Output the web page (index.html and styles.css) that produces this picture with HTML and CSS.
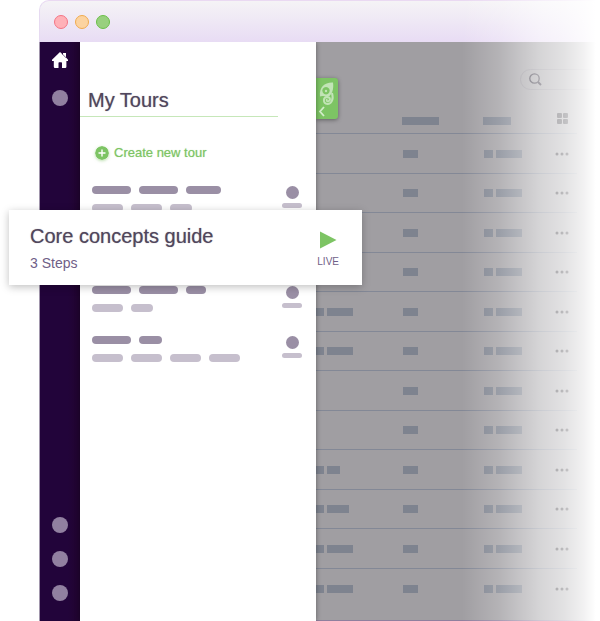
FILE: index.html
```html
<!DOCTYPE html>
<html lang="en">
<head>
  <meta charset="UTF-8">
  <meta name="viewport" content="width=device-width, initial-scale=1.0">
  <title>My Tours</title>
  <link rel="stylesheet" href="styles.css">
</head>
<body>
<div class="window">
  <header class="titlebar">
    <button class="light red" aria-label="Close"></button>
    <button class="light amber" aria-label="Minimize"></button>
    <button class="light green" aria-label="Zoom"></button>
  </header>
  <div class="content">
    <nav class="sidebar">
      <a href="#" class="home" aria-label="Home">
        <svg viewBox="0 0 16 16" width="16" height="16" fill="#fff"><path d="M8 0 L11 2.8 V1 H14 V5.6 L16 7.7 V9 H14.4 V14.8 Q14.4 16 13.2 16 H10 V11 Q10 10.3 9.3 10.3 H7.2 Q6.5 10.3 6.5 11 V16 H3 Q1.8 16 1.8 14.8 V9 H0 V7.7 Z"/><path d="M10.3 2 L14.3 6" stroke="#22043a" stroke-width=".6"/></svg>
      </a>
      <a href="#" class="dot" aria-label="Tours"></a>
      <div class="nav-bottom">
        <a href="#" class="dot" aria-label="Help"></a>
        <a href="#" class="dot" aria-label="Settings"></a>
        <a href="#" class="dot" aria-label="Account"></a>
      </div>
    </nav>

    <section class="panel">
      <h1>My Tours</h1>
      <button class="create">
        <svg viewBox="0 0 14 14" width="14" height="14"><circle cx="7" cy="7" r="7" fill="#7dc464"/><path d="M7 4 V10 M4 7 H10" stroke="#fff" stroke-width="1.4" stroke-linecap="round"/></svg>
        Create new tour
      </button>
      <ul class="tours">
        <li>
          <div class="lines">
            <div class="line dark"><i class="w39"></i><i class="w39"></i><i class="w35"></i></div>
            <div class="line"><i class="w31"></i><i class="w31"></i><i class="w22"></i></div>
          </div>
          <div class="person"><b></b><i></i></div>
        </li>
        <li>
          <article class="card">
            <div class="card-text">
              <h2>Core concepts guide</h2>
              <p>3 Steps</p>
            </div>
            <button class="play">
              <svg viewBox="0 0 18 18" width="18" height="18"><path d="M1 .5 L17.5 9 L1 17.5 Z" fill="#7dc464"/></svg>
              LIVE
            </button>
          </article>
        </li>
        <li>
          <div class="lines">
            <div class="line dark"><i class="w39"></i><i class="w39"></i><i class="w20"></i></div>
            <div class="line"><i class="w31"></i><i class="w22"></i></div>
          </div>
          <div class="person"><b></b><i></i></div>
        </li>
        <li>
          <div class="lines">
            <div class="line dark"><i class="w39"></i><i class="w23"></i></div>
            <div class="line"><i class="w31"></i><i class="w31"></i><i class="w31"></i><i class="w31"></i></div>
          </div>
          <div class="person"><b></b><i></i></div>
        </li>
      </ul>
    </section>

    <main class="page">
      <button class="drawer-tab" aria-label="Collapse panel">
        <svg viewBox="0 0 22 41" width="22" height="41" fill="none">
          <path fill="#c2e4b6" fill-rule="evenodd" d="M17 4.5 C9 4 3 9 4 18.500 C7 17 8.500 19 12 18.500 C16 17.500 18 11 17 4.500 Z M10 9 A3.700 3.700 0 1 0 10.010 9 Z"/>
          <path stroke="#c2e4b6" stroke-width="2" d="M16 15 C18 22 15 26 11.500 26 C6.500 25.500 7 18.500 11.500 19 C15 19.500 14.500 23.500 11.500 23.200 C10.500 23 10.500 21.500 11.500 21.600"/>
          <circle cx="10" cy="13" r="1.200" fill="#c2e4b6"/>
          <path stroke="#d3edca" stroke-width="1.800" d="M8 29 L4 33.500 L8 38"/>
        </svg>
      </button>
      <label class="search">
        <svg viewBox="0 0 13 13" width="13" height="13" fill="none" stroke="#34303e"><circle cx="5.500" cy="5.500" r="4.700" stroke-width="1.300"/><path d="M9 9 L12 12" stroke-width="2"/></svg>
        <input type="search" aria-label="Search">
      </label>
      <table>
        <thead>
          <tr>
            <th></th>
            <th><i class="block w37"></i></th>
            <th><i class="block w28"></i></th>
            <th><svg viewBox="0 0 12 12" width="12" height="12" fill="#2b2930"><rect width="5" height="5" rx="1"/><rect x="6" width="5" height="5" rx="1"/><rect y="6" width="5" height="5" rx="1"/><rect x="6" y="6" width="5" height="5" rx="1"/></svg></th>
          </tr>
        </thead>
        <tbody id="rows"></tbody>
      </table>
    </main>
  </div>
</div>
<script>
// width of the first column block in each row, 0 = hidden
const rows = [0, 0, 0, 0, 26, 26, 0, 0, 13, 22, 26, 26];

function addRow(width) {
  const tr = document.createElement('tr');
  const first = width ? `<i class="block w8"></i><i class="block" style="width:${width}px"></i>` : '';
  tr.innerHTML = `<td>${first}</td>
    <td><i class="block w15"></i></td>
    <td><i class="block w9"></i><i class="block w26"></i></td>
    <td><svg viewBox="0 0 14 4" width="14" height="4" fill="#1d1b22"><circle cx="2" cy="2" r="1.500"/><circle cx="7" cy="2" r="1.500"/><circle cx="12" cy="2" r="1.500"/></svg></td>`;
  document.getElementById('rows').appendChild(tr);
}

rows.forEach(addRow);
</script>
</body>
</html>
```
FILE: styles.css
```css
* { box-sizing: border-box; }
body {
  margin: 0;
  font-family: 'Liberation Sans', Arial, sans-serif;
  background: #fff;
  color: #50465c;
  overflow-x: hidden;
}
button {
  background: none;
  border: none;
  padding: 0;
  font-family: inherit;
  cursor: pointer;
}
svg {
  display: block;
}
i, b {
  display: block;
}
.window {
  position: relative;
  margin-left: 39px;
  min-height: 100vh;
  display: flex;
  flex-direction: column;
}
/* fade out on the right */
.window::after {
  content: '';
  position: absolute;
  top: 0; right: 0; bottom: 0;
  width: 138px;
  pointer-events: none;
  background: linear-gradient(90deg, rgba(255,255,255,0), rgba(255,255,255,0.22) 27%, rgba(255,255,255,0.4) 42%, rgba(255,255,255,0.56) 56%, rgba(255,255,255,0.7) 74%, rgba(255,255,255,0.86) 88%, #fff 97%);
}
.titlebar {
  display: flex;
  align-items: center;
  gap: 7px;
  height: 42px;
  padding-left: 14px;
  border-top: 1px solid #ead9f2;
  border-left: 1px solid #e6daf1;
  border-top-left-radius: 10px;
  background: linear-gradient(#f5f3f6, #e8dcf4);
}
.light {
  width: 14px;
  height: 14px;
  border-radius: 50%;
  border: 1px solid;
}
.red { background: #ffb1b8; border-color: #f47585; }
.amber { background: #fcd3a0; border-color: #f0ab4e; }
.green { background: #98d07e; border-color: #6abf48; }
.content {
  display: flex;
  flex: 1;
}
.sidebar {
  display: flex;
  flex-direction: column;
  align-items: center;
  flex: 0 0 41px;
  padding: 10px 0 20px;
  border-left: 1px solid #a196ac;
  background: linear-gradient(90deg, #22043a 70%, #210431 90%);
}
.dot {
  width: 16px;
  height: 16px;
  border-radius: 50%;
  background: #9180a0;
}
.home {
  margin-bottom: 22px;
}
.nav-bottom {
  display: flex;
  flex-direction: column;
  gap: 18px;
  margin-top: auto;
}
.panel {
  position: relative;
  z-index: 1;
  flex: 0 0 236px;
  padding-top: 45px;
  background: #fff;
  box-shadow: 0 0 5px rgba(0,0,0,0.4);
  clip-path: inset(0 -60px 0 -80px);
}
h1, h2 {
  margin: 0;
  font-size: 20px;
  font-weight: 400;
  line-height: 26px;
  text-shadow: 0 0 1px rgba(80,70,92,0.6);
}
h1 {
  margin-right: 38px;
  padding: 0 0 3px 8px;
  border-bottom: 1px solid #c6e7b9;
}
.create {
  display: flex;
  align-items: center;
  gap: 5px;
  margin: 28px 0 0 15px;
  color: #7dc464;
  font-size: 13px;
  line-height: 16px;
  text-shadow: 0 0 1px rgba(125,196,100,0.6);
}
.create svg {
  border-radius: 50%;
  box-shadow: 0 1px 3px rgba(125,196,100,0.5);
}
.tours {
  list-style: none;
  margin: 25px 0 0;
  padding: 0;
}
.tours li {
  position: relative;
  display: flex;
  justify-content: space-between;
  height: 50px;
  padding: 0 14px 0 12px;
}
.line {
  display: flex;
  gap: 8px;
  margin-bottom: 10px;
}
.line i {
  height: 8px;
  border-radius: 4px;
  background: #c6bfcd;
}
.line.dark i {
  background: #9a8fa5;
}
.person b {
  width: 13px;
  height: 13px;
  margin: 0 auto 4px;
  border-radius: 50%;
  background: #9a8fa5;
}
.person i {
  width: 20px;
  height: 5px;
  border-radius: 3px;
  background: #c6bfcd;
}
.card {
  position: absolute;
  top: -26px;
  left: -71px;
  right: -46px;
  z-index: 2;
  display: flex;
  justify-content: space-between;
  padding: 13px 23px 14px 21px;
  background: #fff;
  box-shadow: 0 2px 8px rgba(0,0,0,0.25);
}
.card p {
  margin: 6px 0 0;
  color: #6f6087;
  font-size: 14px;
  line-height: 16px;
}
.play {
  display: flex;
  flex-direction: column;
  align-items: center;
  gap: 7px;
  padding-top: 8px;
  color: #6f6087;
  font-size: 10px;
  line-height: 12px;
}
.page {
  position: relative;
  flex: 1;
  padding: 27px 23px 0 0;
  background: #a09ea2;
  border-bottom: 1px solid #8f809e;
}
.drawer-tab {
  position: absolute;
  top: 36px;
  left: 0;
  background: #7dc464;
  border-radius: 0 3px 3px 0;
  box-shadow: 0 1px 4px rgba(0,0,0,0.4);
}
.search {
  display: flex;
  align-items: center;
  gap: 4px;
  width: 80px;
  height: 21px;
  margin: 0 -23px 0 auto;
  padding-left: 8px;
  border: 1px solid #8f8c94;
  border-radius: 11px;
}
.search input {
  width: 40px;
  border: none;
  outline: none;
  background: none;
}
table {
  width: 100%;
  table-layout: fixed;
  border-collapse: separate;
  border-spacing: 0;
}
th, td {
  height: 39px;
  padding: 0;
  text-align: left;
  border-bottom: 1px solid #838896;
}
tr:nth-child(odd) td {
  height: 40px;
}
tbody tr:last-child td {
  border-bottom: none;
}
th {
  height: 44px;
  padding-bottom: 8px;
  vertical-align: bottom;
  line-height: 8px;
}
td {
  font-size: 0;
}
th:first-child { width: 33%; }
th:nth-child(2) { width: 31%; }
th:nth-child(3) { width: 27%; }
td:nth-child(2), td:nth-child(3) {
  padding-left: 1px;
}
th:last-child svg, td:last-child svg {
  margin-left: auto;
  margin-right: 8px;
}
.block {
  display: inline-block;
  height: 8px;
  margin-right: 3px;
  vertical-align: middle;
  background: #7e838f;
}
.w8 { width: 8px; }
.w9 { width: 9px; }
.w15 { width: 15px; }
.w20 { width: 20px; }
.w22 { width: 22px; }
.w23 { width: 23px; }
.w26 { width: 26px; }
.w28 { width: 28px; }
.w31 { width: 31px; }
.w35 { width: 35px; }
.w37 { width: 37px; }
.w39 { width: 39px; }
```
